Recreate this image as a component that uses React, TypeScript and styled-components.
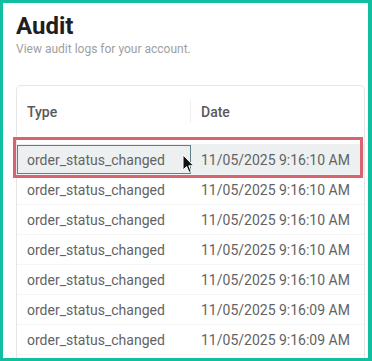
import styled, { createGlobalStyle } from 'styled-components'

const GlobalStyle = createGlobalStyle`
  html, body {
    margin: 0;
    padding: 0;
    background: #ffffff;
  }
  body {
    font-family: Roboto, "Liberation Sans", Arial, sans-serif;
  }
`

const Frame = styled.div`
  position: relative;
  width: 372px;
  height: 361px;
  box-sizing: border-box;
  border: 3px solid #10bf9f;
  border-right-width: 4px;
  padding: 9px 3px 0 13px;
  overflow: hidden;
  background: #ffffff;
`

const Title = styled.h1`
  margin: 0;
  font-size: 24px;
  line-height: 28px;
  font-weight: 700;
  color: #1f1f1f;
`

const Subtitle = styled.p`
  margin: 2px 0 0;
  font-size: 12px;
  line-height: 14px;
  color: #a0a0a0;
`

const Card = styled.div`
  margin-top: 29px;
  border: 1px solid #e6e6e6;
  border-radius: 5px;
  height: 320px;
  overflow: hidden;
`

const Row = styled.div<{ $header?: boolean; $active?: boolean }>`
  display: grid;
  grid-template-columns: 174px 1fr;
  height: ${(p) => (p.$header ? '58px' : '29px')};
  border-bottom: 1px solid ${(p) => (p.$header ? '#eeeeee' : '#f5f5f5')};
  background: ${(p) => (p.$active ? '#edf0f1' : 'transparent')};
`

const HeaderCell = styled.div<{ $divider?: boolean }>`
  position: relative;
  display: flex;
  align-items: center;
  padding: 0 10px 6px;
  font-size: 14px;
  font-weight: 500;
  color: #595959;

  ${(p) =>
    p.$divider &&
    `
    &::after {
      content: '';
      position: absolute;
      right: 0;
      top: 14px;
      height: 23px;
      width: 1px;
      background: #efefef;
    }
  `}
`

const Cell = styled.div<{ $focused?: boolean }>`
  display: flex;
  align-items: center;
  padding: 0 10px;
  font-size: 14px;
  color: #636363;
  white-space: nowrap;
  box-sizing: border-box;
  outline: ${(p) => (p.$focused ? '1px solid #5d7f8c' : 'none')};
  outline-offset: -1px;
`

const Highlight = styled.div`
  position: absolute;
  left: 10px;
  top: 134px;
  width: 350px;
  height: 41px;
  box-sizing: border-box;
  border: 3.5px solid #d8646f;
  pointer-events: none;
`

const Pointer = styled.svg`
  position: absolute;
  left: 179px;
  top: 151px;
`

const rows = [
  '11/05/2025 9:16:10 AM',
  '11/05/2025 9:16:10 AM',
  '11/05/2025 9:16:10 AM',
  '11/05/2025 9:16:10 AM',
  '11/05/2025 9:16:10 AM',
  '11/05/2025 9:16:09 AM',
  '11/05/2025 9:16:09 AM',
]

export default function App() {
  return (
    <>
      <GlobalStyle />
      <Frame>
        <Title>Audit</Title>
        <Subtitle>View audit logs for your account.</Subtitle>
        <Card>
          <Row $header>
            <HeaderCell $divider>Type</HeaderCell>
            <HeaderCell>Date</HeaderCell>
          </Row>
          {rows.map((date, i) => (
            <Row key={i} $active={i === 0}>
              <Cell $focused={i === 0}>order_status_changed</Cell>
              <Cell>{date}</Cell>
            </Row>
          ))}
        </Card>
        <Highlight />
        <Pointer width="13" height="20" viewBox="0 0 13 20">
          <path
            d="M1 1 L1 16 L4.6 12.6 L7 18.4 L9.2 17.5 L6.8 11.8 L11.6 11.8 Z"
            fill="#111"
            stroke="#fff"
            strokeWidth="1"
            strokeLinejoin="round"
          />
        </Pointer>
      </Frame>
    </>
  )
}
